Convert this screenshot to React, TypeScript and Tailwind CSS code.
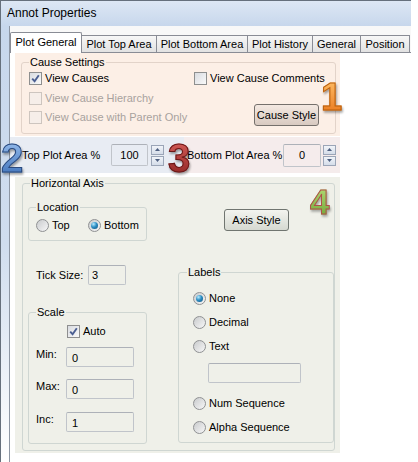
import React from 'react';

type BoxProps = { checked?: boolean; disabled?: boolean };

const Check: React.FC<BoxProps> = ({ checked, disabled }) => (
  <span
    className={`flex h-[13px] w-[13px] shrink-0 items-center justify-center border ${
      disabled ? 'border-[#cdc5bf] bg-[#f6eee9]' : 'border-[#8e8f8f] bg-gradient-to-br from-[#d9dce1] to-[#f9f9f9]'
    }`}
  >
    {checked && (
      <svg width="9" height="9" viewBox="0 0 9 9">
        <path d="M1.2 4.6 L3.6 7.2 L7.8 1.2" stroke="#4b5f92" strokeWidth="1.9" fill="none" />
      </svg>
    )}
  </span>
);

const Radio: React.FC<BoxProps> = ({ checked }) => (
  <span className="flex h-[13px] w-[13px] shrink-0 items-center justify-center rounded-full border border-[#8f9193] bg-gradient-to-br from-[#c9cbcd] to-[#f7f7f7]">
    {checked && (
      <span className="h-[7px] w-[7px] rounded-full bg-[radial-gradient(circle_at_35%_30%,#b8ecff,#2d8ec4_45%,#0c4f7c)]" />
    )}
  </span>
);

const Field: React.FC<{ value?: string; className: string }> = ({ value, className }) => (
  <div className={`flex items-center rounded-[2px] border border-[#c0c4ca] border-t-[#adb1b8] ${className}`}>{value}</div>
);

const Spin: React.FC = () => (
  <div className="flex flex-col gap-[1px]">
    {[0, 1].map((i) => (
      <div
        key={i}
        className="flex h-[10px] w-[13px] items-center justify-center border border-[#9ba5b7] bg-gradient-to-b from-[#f1f4f9] to-[#d5dde9]"
      >
        <svg width="5" height="3" viewBox="0 0 5 3">
          <path d={i === 0 ? 'M0 3 L2.5 0 L5 3Z' : 'M0 0 L2.5 3 L5 0Z'} fill="#4d5f80" />
        </svg>
      </div>
    ))}
  </div>
);

const Tab: React.FC<{ label: string; w: string; active?: boolean }> = ({ label, w, active }) =>
  active ? (
    <div className={`relative z-10 -mb-px flex h-[21px] items-start justify-center rounded-t-[2px] border-x border-t border-[#898c95] bg-white pt-[3px] ${w}`}>
      {label}
    </div>
  ) : (
    <div className={`flex h-[17px] items-center justify-center border-r border-t border-[#898c95] bg-gradient-to-b from-[#f7f7f7] to-[#e2e2e2] ${w}`}>
      {label}
    </div>
  );

export default function App() {
  return (
    <div className="h-[462px] w-[418px] overflow-hidden bg-white font-['Liberation_Sans',Arial,sans-serif] text-[11px] leading-[13px] text-black">
      <div className="flex h-[462px] w-[411px] flex-col border-l border-t border-[#66707c]">
        <div className="flex h-[25px] shrink-0 items-center bg-gradient-to-b from-[#dde7f4] to-[#c7d7ec] pl-[6px] text-[12px]">
          Annot Properties
        </div>
        <div className="flex flex-1">
          <div className="w-[8px] bg-gradient-to-b from-[#c7d7ec] via-[#d0ddee] to-white" />
          <div className="flex flex-1 flex-col border-l border-[#8d96a3] bg-[#f8f8f8]">
            <div className="mt-[5px] flex h-[21px] items-end">
              <Tab label="Plot General" w="w-[72px]" active />
              <Tab label="Plot Top Area" w="w-[75px]" />
              <Tab label="Plot Bottom Area" w="w-[91px]" />
              <Tab label="Plot History" w="w-[65px]" />
              <Tab label="General" w="w-[48px]" />
              <Tab label="Position" w="w-[49px]" />
            </div>
            <div className="flex-1 border-t border-[#898c95] bg-white pl-[5px]">
              {/* 1: cause settings */}
              <div className="relative h-[83px] w-[325px] bg-[#fcefe6] pl-[6px] pt-[3px]">
                <fieldset className="h-[78px] w-[315px] rounded-[3px] border border-[#e2d3c9]">
                  <legend className="ml-[7px] px-[1px] leading-[13px]">Cause Settings</legend>
                  <div className="flex pl-[7px]">
                    <div className="w-[165px]">
                      <div className="flex h-[19px] items-center gap-[3px]">
                        <Check checked />
                        View Causes
                      </div>
                      <div className="flex h-[20px] items-center gap-[3px] text-[#a8a29e]">
                        <Check disabled />
                        View Cause Hierarchy
                      </div>
                      <div className="flex h-[19px] items-center gap-[3px] text-[#a8a29e]">
                        <Check disabled />
                        View Cause with Parent Only
                      </div>
                    </div>
                    <div>
                      <div className="flex h-[19px] items-center gap-[3px]">
                        <Check />
                        View Cause Comments
                      </div>
                      <button className="ml-[60px] mt-[16px] h-[22px] w-[65px] rounded-[3px] border border-[#75706c] bg-gradient-to-b from-[#f4e9e2] to-[#d8cac1]">
                        Cause Style
                      </button>
                    </div>
                  </div>
                </fieldset>
                <span className="absolute left-[306px] top-[25px] bg-gradient-to-b from-[#ffc066] to-[#e8740e] bg-clip-text text-[38px] font-bold leading-none text-transparent drop-shadow-[1px_2px_1px_rgba(0,0,0,0.35)] [-webkit-text-stroke:1px_#b9600f]">
                  1
                </span>
              </div>

              {/* 2 + 3: plot area sizes */}
              <div className="mt-[1px] flex h-[36px]">
                <div className="relative -ml-[5px] flex w-[174px] items-center bg-[#e8ecf3] pl-[12px]">
                  <span className="absolute -left-[9px] top-[1px] bg-gradient-to-b from-[#9cc2f0] to-[#3c6fb8] bg-clip-text text-[40px] font-bold leading-none text-transparent drop-shadow-[1px_2px_1px_rgba(0,0,0,0.35)] [-webkit-text-stroke:1px_#2b4a7e]">
                    2
                  </span>
                  <span className="w-[89px]">Top Plot Area %</span>
                  <Field value="100" className="h-[22px] w-[37px] justify-center" />
                  <div className="ml-[3px]">
                    <Spin />
                  </div>
                </div>
                <div className="relative flex w-[156px] items-center bg-[#f5ecec] pl-[3px]">
                  <span className="absolute -left-[16px] top-[1px] bg-gradient-to-b from-[#d9605c] to-[#8e2222] bg-clip-text text-[40px] font-bold leading-none text-transparent drop-shadow-[1px_2px_1px_rgba(0,0,0,0.35)] [-webkit-text-stroke:1px_#6a1818]">
                    3
                  </span>
                  <span className="w-[96px]">Bottom Plot Area %</span>
                  <Field value="0" className="h-[23px] w-[38px] justify-center" />
                  <div className="ml-[2px]">
                    <Spin />
                  </div>
                </div>
              </div>

              {/* 4: horizontal axis */}
              <div className="relative mt-[4px] h-[276px] w-[325px] bg-[#eff0e9] pl-[7px]">
                <fieldset className="h-[274px] w-[313px] rounded-[3px] border border-[#cfd6d2]">
                  <legend className="ml-[7px] px-[1px] leading-[13px]">Horizontal Axis</legend>
                  <div className="ml-[5px] mt-[11px] flex items-start">
                    <fieldset className="h-[40px] w-[119px] rounded-[3px] border border-[#cfd6d2]">
                      <legend className="ml-[7px] px-[1px] leading-[13px]">Location</legend>
                      <div className="flex h-[22px] items-center pl-[7px]">
                        <div className="flex w-[52px] items-center gap-[3px]">
                          <Radio />
                          Top
                        </div>
                        <div className="flex items-center gap-[3px]">
                          <Radio checked />
                          Bottom
                        </div>
                      </div>
                    </fieldset>
                    <button className="ml-[77px] mt-[8px] h-[22px] w-[65px] rounded-[3px] border border-[#707570] bg-gradient-to-b from-[#f3f4ef] to-[#d6d9d1]">
                      Axis Style
                    </button>
                  </div>

                  <div className="mt-[24px] flex">
                    <div className="w-[155px]">
                      <div className="flex h-[20px] items-center pl-[13px]">
                        <span className="w-[52px]">Tick Size:</span>
                        <Field value="3" className="h-[20px] w-[38px] pl-[3px]" />
                      </div>
                      <fieldset className="ml-[5px] mt-[21px] h-[138px] w-[119px] rounded-[3px] border border-[#cfd6d2]">
                        <legend className="ml-[7px] px-[1px] leading-[13px]">Scale</legend>
                        <div className="mt-[4px] flex h-[16px] items-center gap-[3px] pl-[38px]">
                          <Check checked />
                          Auto
                        </div>
                        <div className="mt-[8px] flex items-start pl-[7px]">
                          <span className="w-[30px] pt-[1px]">Min:</span>
                          <Field value="0" className="h-[20px] w-[68px] pl-[5px] pt-[2px]" />
                        </div>
                        <div className="mt-[12px] flex items-start pl-[7px]">
                          <span className="w-[30px] pt-[1px]">Max:</span>
                          <Field value="0" className="h-[20px] w-[68px] pl-[5px] pt-[2px]" />
                        </div>
                        <div className="mt-[13px] flex items-start pl-[7px]">
                          <span className="w-[30px] pt-[1px]">Inc:</span>
                          <Field value="1" className="h-[20px] w-[68px] pl-[5px] pt-[2px]" />
                        </div>
                      </fieldset>
                    </div>
                    <fieldset className="mt-[1px] h-[177px] w-[156px] rounded-[3px] border border-[#cfd6d2]">
                      <legend className="ml-[8px] px-[1px] leading-[13px]">Labels</legend>
                      <div className="mt-[7px] pl-[14px]">
                        {['None', 'Decimal', 'Text'].map((t, i) => (
                          <div key={t} className="flex h-[24px] items-center gap-[3px]">
                            <Radio checked={i === 0} />
                            {t}
                          </div>
                        ))}
                        <Field className="ml-[15px] mt-[5px] h-[20px] w-[93px]" />
                        <div className="mt-[8px]">
                          {['Num Sequence', 'Alpha Sequence'].map((t) => (
                            <div key={t} className="flex h-[24px] items-center gap-[3px]">
                              <Radio />
                              {t}
                            </div>
                          ))}
                        </div>
                      </div>
                    </fieldset>
                  </div>
                </fieldset>
                <span className="absolute left-[295px] top-[7px] bg-gradient-to-b from-[#b8df7a] to-[#6fa533] bg-clip-text text-[35px] font-bold leading-none text-transparent drop-shadow-[1px_2px_1px_rgba(0,0,0,0.3)] [-webkit-text-stroke:1px_#b0504a]">
                  4
                </span>
              </div>
            </div>
          </div>
        </div>
      </div>
    </div>
  );
}
